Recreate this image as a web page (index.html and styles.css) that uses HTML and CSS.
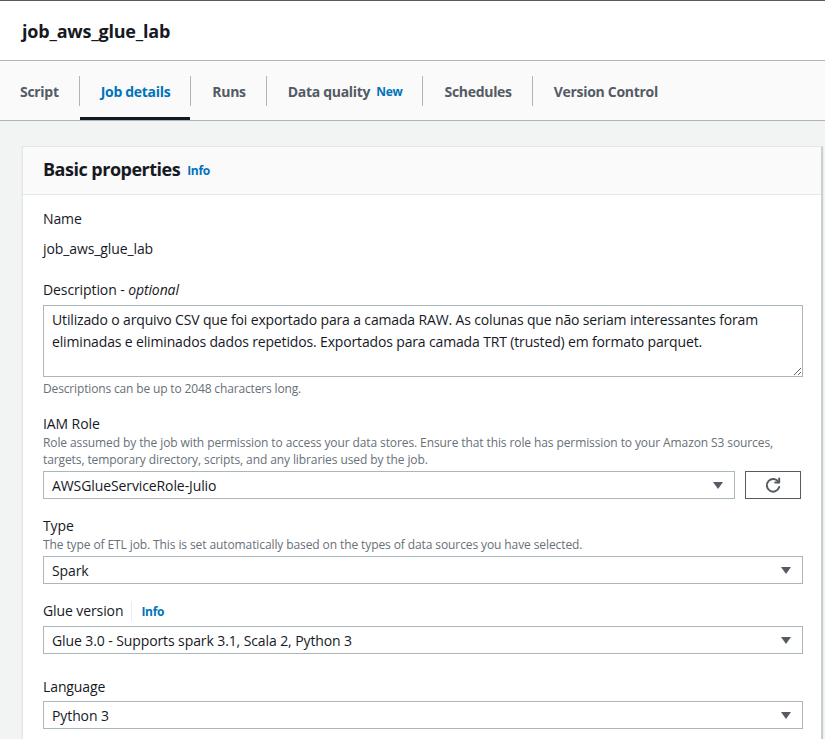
FILE: index.html
```html
<!DOCTYPE html>
<html lang="en">
<head>
<meta charset="utf-8">
<title>job_aws_glue_lab</title>
<link rel="stylesheet" href="styles.css">
</head>
<body>
<div class="topline"></div>
<header class="page-header">
  <h1 class="page-title">job_aws_glue_lab</h1>
</header>
<nav class="tabs">
  <div class="tab first">Script</div>
  <span class="sep"></span>
  <div class="tab active">Job details</div>
  <span class="sep"></span>
  <div class="tab">Runs</div>
  <span class="sep"></span>
  <div class="tab">Data quality <span class="badge-new">New</span></div>
  <span class="sep"></span>
  <div class="tab">Schedules</div>
  <span class="sep"></span>
  <div class="tab">Version Control</div>
</nav>
<main class="content">
  <section class="card">
    <div class="card-header">
      <h2 class="card-title">Basic properties</h2>
      <span class="info">Info</span>
    </div>
    <div class="card-body">
      <div class="field">
        <div class="label">Name</div>
        <div class="value">job_aws_glue_lab</div>
      </div>
      <div class="field">
        <div class="label">Description - <i>optional</i></div>
        <textarea class="textarea" wrap="off">Utilizado o arquivo CSV que foi exportado para a camada RAW. As colunas que não seriam interessantes foram
eliminadas e eliminados dados repetidos. Exportados para camada TRT (trusted) em formato parquet.</textarea>
        <div class="hint">Descriptions can be up to 2048 characters long.</div>
      </div>
      <div class="field">
        <div class="label">IAM Role</div>
        <div class="desc">Role assumed by the job with permission to access your data stores. Ensure that this role has permission to your Amazon S3 sources,<br>targets, temporary directory, scripts, and any libraries used by the job.</div>
        <div class="select-row">
          <div class="select"><span>AWSGlueServiceRole-Julio</span><span class="caret"></span></div>
          <button class="refresh" type="button" aria-label="Refresh">
            <svg width="18" height="18" viewBox="0 0 18 18" fill="none" stroke="#545b64" stroke-width="2" stroke-linecap="round" stroke-linejoin="round">
              <path d="M14.6 6.2 A6.3 6.3 0 1 0 15.2 11"/>
              <path d="M15.2 2.6 V6.6 H11.2"/>
            </svg>
          </button>
        </div>
      </div>
      <div class="field">
        <div class="label">Type</div>
        <div class="desc">The type of ETL job. This is set automatically based on the types of data sources you have selected.</div>
        <div class="select"><span>Spark</span><span class="caret"></span></div>
      </div>
      <div class="field field-glue">
        <div class="label label-row">Glue version <span class="vsep"></span><span class="info">Info</span></div>
        <div class="select"><span>Glue 3.0 - Supports spark 3.1, Scala 2, Python 3</span><span class="caret"></span></div>
      </div>
      <div class="field">
        <div class="label">Language</div>
        <div class="select"><span>Python 3</span><span class="caret"></span></div>
      </div>
    </div>
  </section>
</main>
</body>
</html>
```
FILE: styles.css
```css
* { box-sizing: border-box; }
html, body { margin: 0; padding: 0; }
body {
  font-family: "Open Sans", "Noto Sans", sans-serif;
  color: #16191f;
  background: #f2f3f3;
  font-size: 14px;
  letter-spacing: -0.1px;
  overflow: hidden;
}
.topline { height: 1px; background: #545b64; }
.page-header {
  background: #fff;
  height: 60px;
  border-bottom: 1px solid #aab7b8;
  display: flex;
  align-items: center;
  padding-left: 22px;
}
.page-title {
  margin: 0;
  font-size: 18px;
  font-weight: 700;
  letter-spacing: -0.2px;
  line-height: 24px;
}
.tabs {
  display: flex;
  align-items: stretch;
  height: 60px;
  background: #fafafa;
  border-bottom: 1px solid #aab7b8;
}
.tab {
  display: flex;
  align-items: center;
  padding: 4px 20px 0 21px;
  font-size: 14px;
  font-weight: 700;
  color: #545b64;
  border-bottom: 3px solid transparent;
  letter-spacing: -0.3px;
}
.tab.first { padding-left: 20px; }
.tab.active {
  color: #0073bb;
  border-bottom-color: #16191f;
}
.badge-new {
  color: #0073bb;
  font-size: 12px;
  margin-left: 6px;
  letter-spacing: -0.3px;
}
.sep {
  width: 1px;
  height: 30px;
  align-self: center;
  background: #aab7b8;
}
.content {
  padding: 25px 2px 0 22px;
}
.card {
  background: #fff;
  border: 1px solid #e3e7e8;
  border-right: 2px solid #c9cfd0;
  box-shadow: 0 1px 1px rgba(0,28,36,0.15);
}
.card-header {
  height: 48px;
  background: #fafafa;
  border-bottom: 1px solid #e3e7e8;
  display: flex;
  align-items: center;
  padding: 0 20px 4px;
}
.card-title {
  margin: 0;
  font-size: 18px;
  font-weight: 700;
  letter-spacing: -0.5px;
}
.info {
  color: #0073bb;
  font-weight: 700;
  font-size: 12px;
  margin-left: 7px;
  padding-top: 3px;
  letter-spacing: -0.3px;
}
.card-body {
  padding: 13px 20px 10px;
}
.field { margin-bottom: 16px; }
.label {
  line-height: 22px;
  font-size: 14px;
  color: #16191f;
}
.label i { font-style: italic; }
.value {
  margin-top: 8px;
  line-height: 22px;
  margin-bottom: 19px;
}
.textarea {
  display: block;
  width: 760px;
  height: 72px;
  margin-top: 4px;
  border: 1px solid #aab7b8;
  padding: 3px 8px;
  font-family: inherit;
  font-size: 14px;
  letter-spacing: -0.15px;
  line-height: 22px;
  color: #16191f;
  resize: both;
  overflow: hidden;
  white-space: pre;
}
.hint {
  margin-top: 4px;
  font-size: 12px;
  line-height: 16px;
  color: #687078;
  letter-spacing: -0.15px;
  margin-bottom: 16px;
}
.desc {
  font-size: 12px;
  line-height: 17px;
  color: #687078;
  letter-spacing: -0.1px;
  margin-top: -1px;
}
.select-row {
  display: flex;
  gap: 10px;
  margin-top: 3px;
}
.select-row .select { flex: 0 0 692px; margin-top: 0; }
.select {
  height: 28px;
  width: 760px;
  margin-top: 3px;
  border: 1px solid #aab7b8;
  display: flex;
  align-items: center;
  justify-content: space-between;
  padding: 0 11px 0 8px;
  font-size: 14px;
  color: #16191f;
  background: #fff;
}
.caret {
  width: 0; height: 0;
  border-left: 5px solid transparent;
  border-right: 5px solid transparent;
  border-top: 7px solid #545b64;
}
.refresh {
  width: 58px;
  height: 28px;
  border: 1px solid #545b64;
  background: #fff;
  display: flex;
  align-items: center;
  justify-content: center;
  padding: 0;
}
.field-glue { margin-top: 1px; margin-bottom: 22px; }
.field-glue .select { margin-top: 4px; }
.label-row {
  display: flex;
  align-items: center;
  height: 22px;
}
.vsep {
  width: 1px;
  height: 20px;
  background: #eaeded;
  margin-left: 8px;
}
.label-row .info { margin-left: 9px; padding-top: 1px; }
```
